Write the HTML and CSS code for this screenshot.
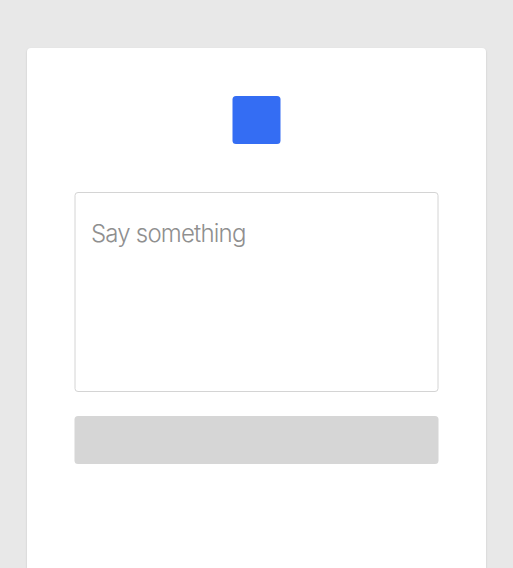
FILE: index.html
```html
<!DOCTYPE html>
<html lang="en">
<head>
<meta charset="utf-8">
<title>Message</title>
<link rel="stylesheet" href="styles.css">
</head>
<body>
<main class="card">
  <div class="logo"></div>
  <form class="form">
    <textarea class="message" placeholder="Say something" aria-label="Message"></textarea>
    <button class="submit" type="button" aria-label="Send" disabled></button>
  </form>
</main>
</body>
</html>
```
FILE: styles.css
```css
* {
  box-sizing: border-box;
}

body {
  margin: 0;
  height: 568px;
  padding: 48px 27px 0;
  overflow: hidden;
  background: #e8e8e8;
  font-family: Inter, sans-serif;
}

.card {
  height: 520px;
  padding: 48px;
  background: #fff;
  border-radius: 4px 4px 0 0;
  box-shadow: 0 1px 2px rgba(0, 0, 0, 0.18);
}

.logo {
  width: 48px;
  height: 48px;
  margin: 0 auto 48px;
  background: #346df3;
  border-radius: 3.5px;
  transform: translateX(-0.5px);
}

.form {
  display: flex;
  flex-direction: column;
  gap: 24px;
  margin: 0 -1px 0 0;
  transform: translateX(-0.5px);
}

.message {
  display: block;
  width: 100%;
  height: 200px;
  padding: 24px 15.5px;
  border: 1px solid #d4d4d4;
  border-radius: 3.5px;
  background: #fff;
  resize: none;
  font: 300 24px/34px Inter, sans-serif;
  letter-spacing: -0.8px;
}

.message::placeholder {
  color: #8f8f8f;
  opacity: 1;
}

.submit {
  width: 100%;
  height: 48px;
  border: 0;
  border-radius: 3.5px;
  background: #d6d6d6;
}
```
